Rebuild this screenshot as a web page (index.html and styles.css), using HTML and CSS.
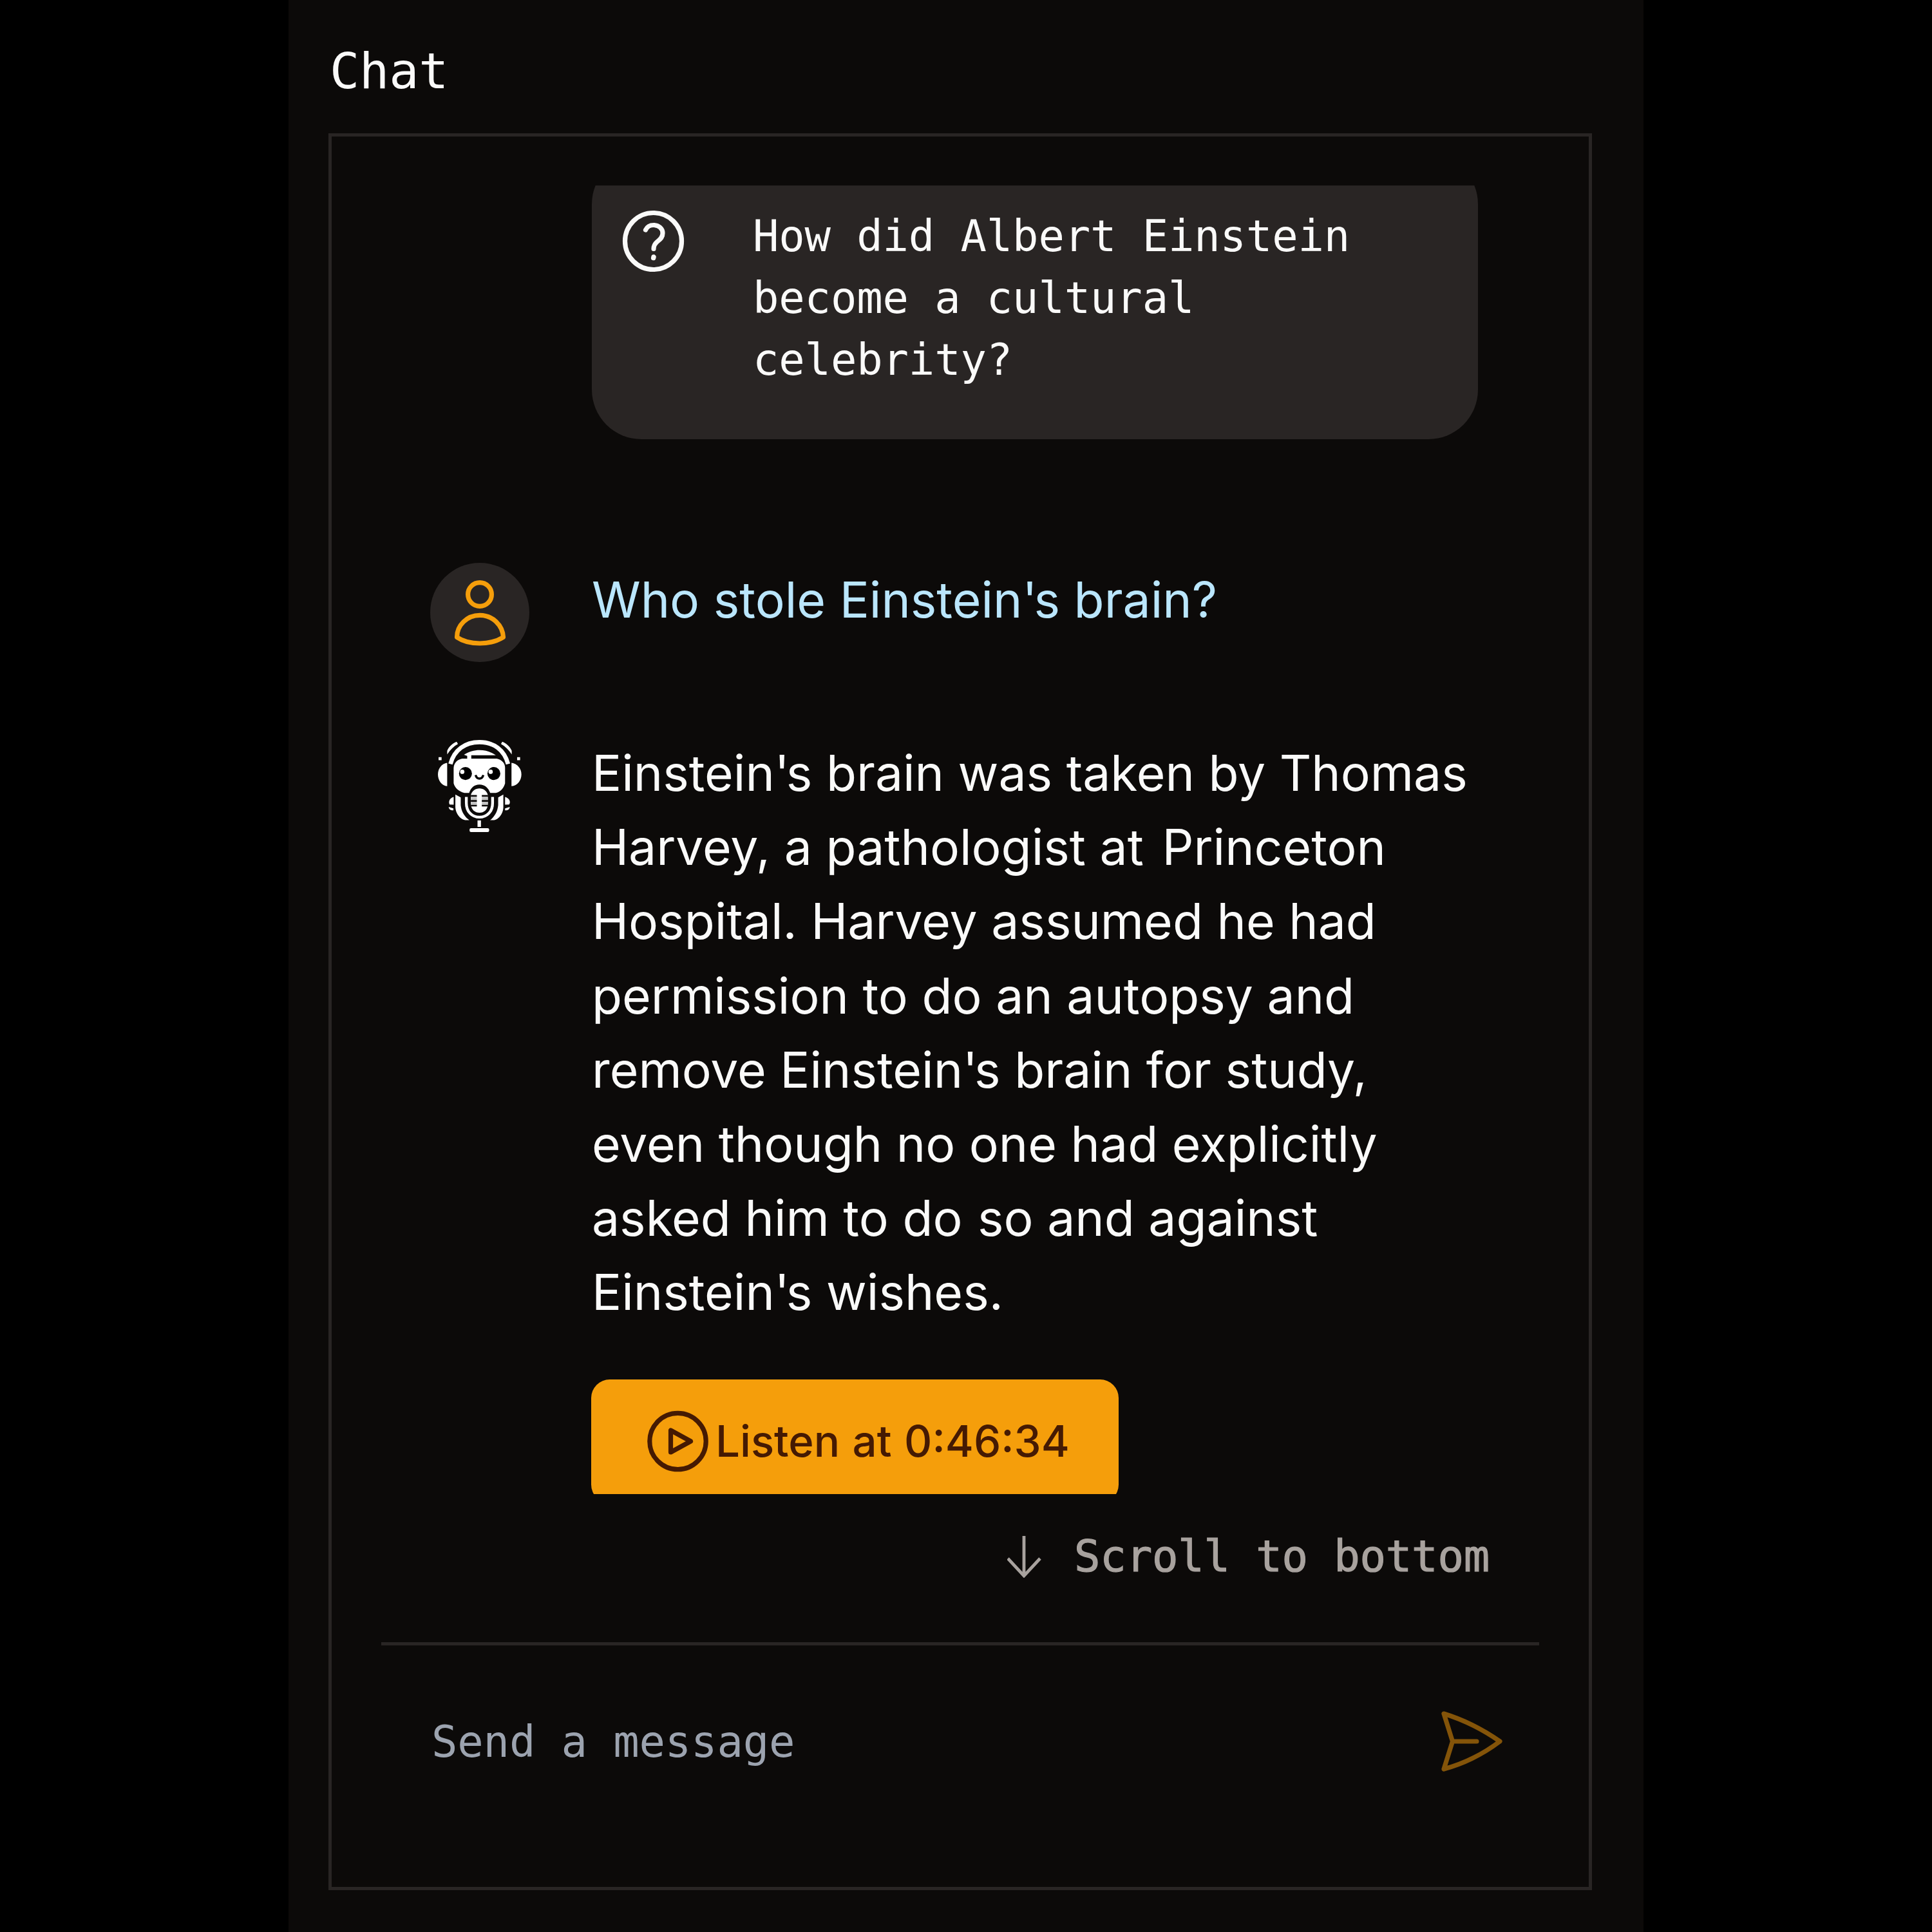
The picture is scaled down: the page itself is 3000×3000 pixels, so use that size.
FILE: index.html
```html
<!DOCTYPE html>
<html lang="en">
<head>
<meta charset="utf-8">
<title>Chat</title>
<link rel="stylesheet" href="styles.css">
</head>
<body>
<main class="panel">
  <h1 class="title">Chat</h1>
  <section class="chat">
    <div class="messages">
      <div class="suggestion">
        <svg class="icon" viewBox="0 0 115 115"><circle cx="57.5" cy="57.5" r="44"/><path d="M45.500 40C48 34.500 53 32.500 58 32.500C66 32.500 72 38 72 45C72 51 69 54 64.500 57.500C60 61 58 64 58 69.500"/><path class="dot" d="M58 82L57.700 83.500"/></svg>
        <p class="suggestion-text">How did Albert Einstein<br>become a cultural<br>celebrity?</p>
      </div>
      <div class="message">
        <div class="avatar">
          <svg class="avatar-icon" viewBox="0 0 154 154"><circle cx="77" cy="49" r="18.400"/><path d="M41.500 115.500C41.500 97 57 81.300 77 81.300S112.500 97 113.500 115.500C103 122 90 125 77 125S51 122 41.500 115.500Z"/></svg>
        </div>
        <p class="text question">Who stole Einstein<span class="apos">'</span>s brain?</p>
      </div>
      <div class="message">
        <svg class="robot" viewBox="25 66 461 461">
          <g class="robot-line">
            <path stroke-width="20" d="M119 196C136 130 188 94 254 94S370 130 387 196"/>
            <path stroke-width="13" d="M193 349V377C193 418 220 443 254 443S315 418 315 377V349"/>
          </g>
          <g class="robot-fill">
            <path d="M104 190V299C79 296 61 273 61 244S79 194 104 190Z"/>
            <path d="M403 190V299C430 296 449 273 449 244S429 194 403 190Z"/>
            <path d="M104 151V134C113 114 129 99 148 92L154 103C134 114 119 130 104 151Z"/>
            <path d="M404 151V134C395 114 379 99 360 92L354 103C374 114 389 130 404 151Z"/>
            <rect x="64" y="164" width="14" height="14"/><rect x="429" y="164" width="14" height="14"/>
            <path d="M182 153C205 137 230 131 254 131C282 131 305 138 330 155H216V171H334C357 176 373 191 373 213V286C366 309 353 325 330 330H304C295 306 279 291 254 291S214 306 206 330H184C156 322 140 307 134 285V214C136 191 151 175 174 171H197V158Z"/>
            <path d="M142 338L167 351V387C170 417 184 440 207 457H188C160 450 144 425 142 397Z"/>
            <path d="M365 338L341 351V387C338 417 325 440 303 457H322C348 450 364 425 365 397Z"/>
            <path d="M134 349V385L115 384C109 371 115 354 134 349Z"/><path d="M373 349V385L392 384C401 371 392 354 373 349Z"/>
            <path d="M111 395L133 402V411C120 412 112 406 111 395Z"/><path d="M395 395L373 402V411C386 412 394 406 395 395Z"/>
            <path d="M214 340C219 321 235 309 254 309S288 321 293 340V383C292 408 275 422 254 422S216 408 214 383Z"/>
            <rect x="245" y="458" width="16" height="30"/><rect x="208" y="494" width="91" height="18" rx="7"/>
          </g>
          <path class="mic-slots" d="M214 344H242M265 344H294M214 367H242M265 367H294M214 389H242M265 389H294"/>
          <path class="mic-bars" d="M215 356H242M265 356H293M215 378H242M265 378H293"/>
          <circle cx="189" cy="240" r="30"/><circle cx="321" cy="240" r="30"/>
          <circle class="glint" cx="174" cy="232" r="10"/><circle class="glint" cx="306" cy="232" r="10"/>
          <path class="smile" d="M236 247C242 269 266 269 272 247"/>
        </svg>
        <div class="answer">
          <p class="text">Einstein<span class="apos">'</span>s brain was taken by Thomas<br>Harvey, a pathologist at<span class="wide-space"> </span>Princeton<br>Hospital. Harvey assumed he had<br>permission to do an autopsy and<br>remove Einstein<span class="apos">'</span>s brain for study,<br>even though no one had explicitly<br>asked him to do<span class="thin-space"> </span>so and against<br>Einstein<span class="apos">'</span>s wishes.</p>
          <div class="listen">
            <svg class="icon" viewBox="0 0 115 115"><circle cx="57.500" cy="58" r="43.700"/><path d="M46.500 41V75L77.500 58Z"/></svg>
            <span>Listen at 0:46:34</span>
          </div>
        </div>
      </div>
    </div>
    <div class="scroll">
      <svg class="arrow" viewBox="0 0 54 68"><path d="M26 3V64M1 38L26 65L51 38"/></svg>
      <span class="scroll-label">Scroll to bottom</span>
    </div>
    <div class="composer">
      <span class="placeholder">Send a message</span>
      <svg class="icon send" viewBox="0 0 115 115"><path d="M15 13C46 22.500 74 36.500 102 56C75 76.500 46 90.500 15 99L28.500 56ZM28.500 56H66"/></svg>
    </div>
  </section>
</main>
</body>
</html>
```
FILE: styles.css
```css
* { box-sizing: border-box; }

body {
  margin: 0;
  background: #000;
  color: #fafaf9;
}

h1, p { margin: 0; font-weight: 400; }

svg { display: block; flex: none; }

.panel {
  width: 2104px;
  height: 3000px;
  margin: 0 auto;
  padding: 53px 80px 0 62px;
  background: #0c0a09;
  font-family: "DejaVu Sans Mono", monospace;
  font-size: 67.2px;
  line-height: 96px;
  letter-spacing: -0.14px;
}

.title {
  padding-left: 2px;
  font-size: 76.8px;
  line-height: 115px;
}

.chat {
  height: 2728px;
  margin-top: 38.500px;
  padding: 76.500px 77px 0;
  border: 5px solid #292524;
}

.messages {
  height: 2032px;
  overflow: hidden;
}

.icon {
  width: 115px;
  height: 115px;
  fill: none;
  stroke: currentColor;
  stroke-width: 7.200;
  stroke-linecap: round;
  stroke-linejoin: round;
}

.suggestion {
  display: flex;
  gap: 97.500px;
  width: 1376px;
  height: 442px;
  margin: -48px 0 192px 326.500px;
  padding: 77px 38px;
  background: #292524;
  border-radius: 77px;
}

.suggestion-text { padding-top: 1.500px; }

.dot { stroke-width: 7.500; }

.message {
  display: flex;
  align-items: flex-start;
  gap: 96px;
  margin: 0 0 115px 76px;
}

.avatar, .robot {
  flex: none;
  width: 154px;
  height: 154px;
}

.avatar {
  border-radius: 50%;
  background: #292524;
}

.avatar-icon {
  fill: none;
  stroke: #f59e0b;
  stroke-width: 7.200;
  stroke-linejoin: round;
}

.robot-line { fill: none; stroke: #fff; }
.robot-fill, .glint { fill: #fff; }
.mic-slots { stroke: #0c0a09; stroke-width: 8; }
.mic-bars { stroke: #c4c4c4; stroke-width: 13; }
.smile { fill: none; stroke: #000; stroke-width: 10; }

.text {
  padding-left: 1px;
  font-family: Inter, sans-serif;
  font-size: 76.8px;
  line-height: 115.2px;
  letter-spacing: 0;
  white-space: nowrap;
}

.question { color: #bae6fd; }
.apos { letter-spacing: -5px; }
.wide-space { letter-spacing: 7px; }
.thin-space { letter-spacing: 2px; }

.listen {
  display: flex;
  align-items: center;
  gap: 1px;
  width: 819px;
  height: 192px;
  margin-top: 77px;
  padding: 0 77px;
  border-radius: 28.800px;
  background: #f59e0b;
  color: #451a03;
  font-family: Inter, sans-serif;
  font-weight: 500;
  letter-spacing: 0;
  word-spacing: 1.500px;
  white-space: nowrap;
}

.scroll {
  display: flex;
  align-items: center;
  justify-content: flex-end;
  gap: 50px;
  height: 192px;
  margin-bottom: 38px;
  padding-right: 77px;
  color: #a8a29e;
}

.scroll-label {
  padding-top: 2px;
  -webkit-text-stroke: 1.200px currentColor;
}

.arrow {
  width: 54px;
  height: 68px;
  fill: none;
  stroke: currentColor;
  stroke-width: 4.800;
}

.composer {
  display: flex;
  align-items: center;
  justify-content: space-between;
  height: 305px;
  padding: 0 48px 0 78px;
  border-top: 5px solid #292524;
}

.placeholder { color: #9ca3af; }
.send { color: #845409; }
```
